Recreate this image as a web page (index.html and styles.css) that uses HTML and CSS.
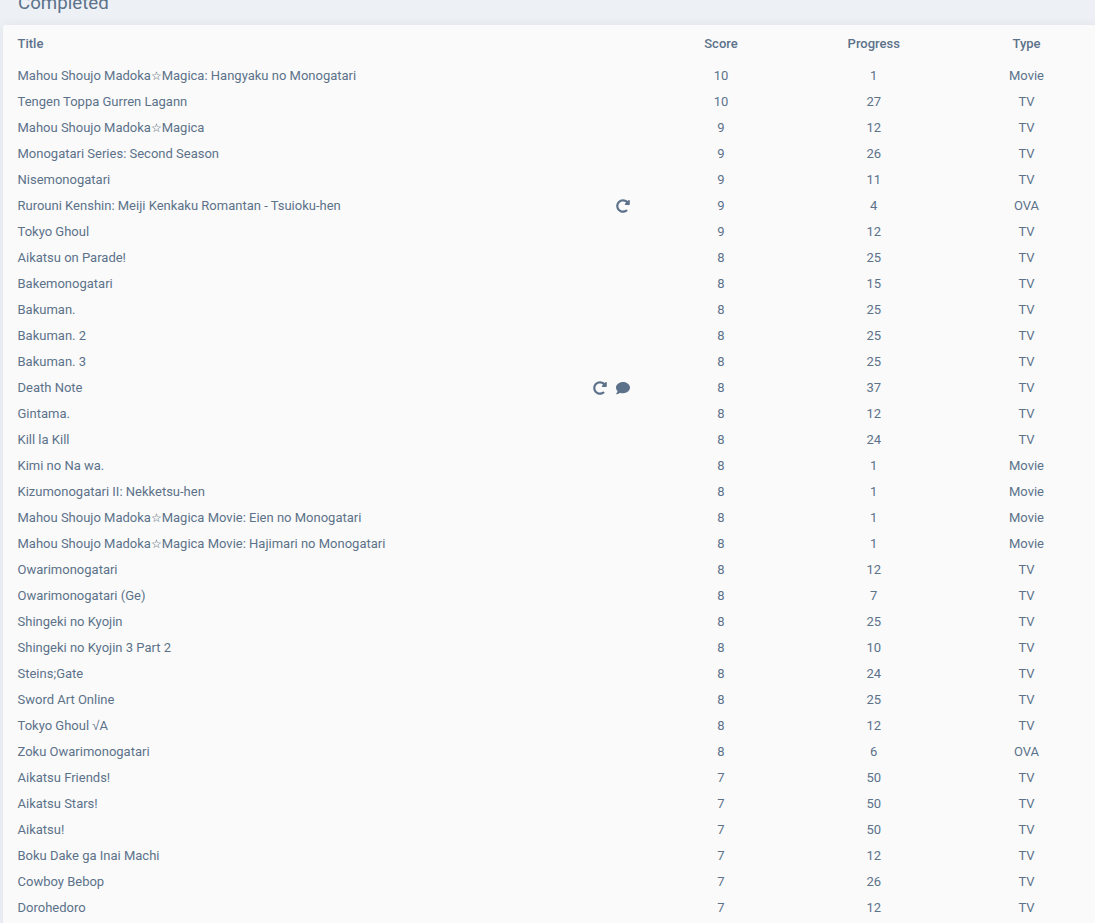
FILE: index.html
```html
<!DOCTYPE html>
<html lang="en">
<head>
<meta charset="utf-8">
<title>Completed</title>
<link rel="stylesheet" href="styles.css">
</head>
<body>
<svg class="defs" width="0" height="0" aria-hidden="true">
<symbol id="redo" viewBox="0 0 512 512"><path d="M256.455 8c66.269.119 126.437 26.233 170.859 68.685l35.715-35.715C478.149 25.851 504 36.559 504 57.941V192c0 13.255-10.745 24-24 24H345.941c-21.382 0-32.09-25.851-16.971-40.971l41.75-41.75c-30.864-28.899-70.801-44.907-113.23-45.273-92.398-.798-170.283 73.977-169.484 169.442C88.764 348.009 162.184 424 256 424c41.127 0 79.997-14.678 110.629-41.556 4.743-4.161 11.906-3.908 16.368.553l39.662 39.662c4.872 4.872 4.631 12.815-.482 17.433C378.202 479.813 319.926 504 256 504 119.034 504 8.001 392.967 8 256.002 7.999 119.193 119.646 7.755 256.455 8z"/></symbol>
<symbol id="comment" viewBox="0 0 512 512"><path d="M256 32C114.6 32 0 125.1 0 240c0 49.6 21.4 95 57 130.7C44.5 421.1 2.7 466 2.2 466.5c-2.2 2.3-2.8 5.7-1.5 8.7S4.8 480 8 480c66.3 0 116-31.8 140.6-51.4 32.7 12.3 69 19.4 107.4 19.4 141.4 0 256-93.1 256-208S397.4 32 256 32z"/></symbol>
</svg>
<main class="page">
<h2 class="section-name">Completed</h2>
<section class="panel">
<div class="row head"><div class="title">Title</div><div>Score</div><div>Progress</div><div>Type</div></div>
<div class="row"><div class="title">Mahou Shoujo Madoka<span class="star">☆</span>Magica: Hangyaku no Monogatari</div><div>10</div><div>1</div><div>Movie</div></div>
<div class="row"><div class="title">Tengen Toppa Gurren Lagann</div><div>10</div><div>27</div><div>TV</div></div>
<div class="row"><div class="title">Mahou Shoujo Madoka<span class="star">☆</span>Magica</div><div>9</div><div>12</div><div>TV</div></div>
<div class="row"><div class="title">Monogatari Series: Second Season</div><div>9</div><div>26</div><div>TV</div></div>
<div class="row"><div class="title">Nisemonogatari</div><div>9</div><div>11</div><div>TV</div></div>
<div class="row"><div class="title">Rurouni Kenshin: Meiji Kenkaku Romantan - Tsuioku-hen<span class="notes"><svg class="icon"><use href="#redo"/></svg></span></div><div>9</div><div>4</div><div>OVA</div></div>
<div class="row"><div class="title">Tokyo Ghoul</div><div>9</div><div>12</div><div>TV</div></div>
<div class="row"><div class="title">Aikatsu on Parade!</div><div>8</div><div>25</div><div>TV</div></div>
<div class="row"><div class="title">Bakemonogatari</div><div>8</div><div>15</div><div>TV</div></div>
<div class="row"><div class="title">Bakuman.</div><div>8</div><div>25</div><div>TV</div></div>
<div class="row"><div class="title">Bakuman. 2</div><div>8</div><div>25</div><div>TV</div></div>
<div class="row"><div class="title">Bakuman. 3</div><div>8</div><div>25</div><div>TV</div></div>
<div class="row"><div class="title">Death Note<span class="notes"><svg class="icon"><use href="#redo"/></svg><svg class="icon"><use href="#comment"/></svg></span></div><div>8</div><div>37</div><div>TV</div></div>
<div class="row"><div class="title">Gintama.</div><div>8</div><div>12</div><div>TV</div></div>
<div class="row"><div class="title">Kill la Kill</div><div>8</div><div>24</div><div>TV</div></div>
<div class="row"><div class="title">Kimi no Na wa.</div><div>8</div><div>1</div><div>Movie</div></div>
<div class="row"><div class="title">Kizumonogatari II: Nekketsu-hen</div><div>8</div><div>1</div><div>Movie</div></div>
<div class="row"><div class="title">Mahou Shoujo Madoka<span class="star">☆</span>Magica Movie: Eien no Monogatari</div><div>8</div><div>1</div><div>Movie</div></div>
<div class="row"><div class="title">Mahou Shoujo Madoka<span class="star">☆</span>Magica Movie: Hajimari no Monogatari</div><div>8</div><div>1</div><div>Movie</div></div>
<div class="row"><div class="title">Owarimonogatari</div><div>8</div><div>12</div><div>TV</div></div>
<div class="row"><div class="title">Owarimonogatari (Ge)</div><div>8</div><div>7</div><div>TV</div></div>
<div class="row"><div class="title">Shingeki no Kyojin</div><div>8</div><div>25</div><div>TV</div></div>
<div class="row"><div class="title">Shingeki no Kyojin 3 Part 2</div><div>8</div><div>10</div><div>TV</div></div>
<div class="row"><div class="title">Steins;Gate</div><div>8</div><div>24</div><div>TV</div></div>
<div class="row"><div class="title">Sword Art Online</div><div>8</div><div>25</div><div>TV</div></div>
<div class="row"><div class="title">Tokyo Ghoul <span class="root">√</span>A</div><div>8</div><div>12</div><div>TV</div></div>
<div class="row"><div class="title">Zoku Owarimonogatari</div><div>8</div><div>6</div><div>OVA</div></div>
<div class="row"><div class="title">Aikatsu Friends!</div><div>7</div><div>50</div><div>TV</div></div>
<div class="row"><div class="title">Aikatsu Stars!</div><div>7</div><div>50</div><div>TV</div></div>
<div class="row"><div class="title">Aikatsu!</div><div>7</div><div>50</div><div>TV</div></div>
<div class="row"><div class="title">Boku Dake ga Inai Machi</div><div>7</div><div>12</div><div>TV</div></div>
<div class="row"><div class="title">Cowboy Bebop</div><div>7</div><div>26</div><div>TV</div></div>
<div class="row"><div class="title">Dorohedoro</div><div>7</div><div>12</div><div>TV</div></div>
</section>
</main>
</body>
</html>
```
FILE: styles.css
```css
html, body {
  margin: 0;
  height: 923px;
  overflow: hidden;
  background: #edf1f5;
}
.defs {
  display: block;
  height: 0;
}
.page {
  width: 1100px;
  margin-left: 3px;
  font-family: Roboto, "DejaVu Sans", sans-serif;
  color: rgb(92, 114, 138);
}
.section-name {
  margin: -12px 0 0;
  padding-left: 15px;
  height: 37px;
  font-size: 18.7px;
  font-weight: 400;
  line-height: 30px;
  color: rgb(92, 114, 138);
}
.panel {
  background: #fafafa;
  border-radius: 3px 0 0 3px;
  padding: 6px 0 20px 14.5px;
  box-shadow: 0 0 10px rgba(49, 54, 68, 0.07);
}
.row {
  display: grid;
  grid-template-columns: 1fr 153px 152.5px 153px;
  height: 26px;
  align-items: center;
  text-align: center;
  font-size: 13px;
  line-height: 26px;
}
.head {
  height: 26px;
  margin-bottom: 6px;
  font-weight: 500;
}
.title {
  position: relative;
  text-align: left;
}
.star {
  font-family: "DejaVu Sans", sans-serif;
  font-size: 12px;
  line-height: 1;
  color: rgb(66, 84, 106);
}
.root {
  font-family: "Liberation Sans", sans-serif;
  line-height: 1;
}
.notes {
  position: absolute;
  right: 14.5px;
  top: 5.5px;
  display: flex;
  gap: 9px;
}
.icon {
  display: block;
  width: 14px;
  height: 14px;
  fill: rgb(92, 114, 138);
}
```
